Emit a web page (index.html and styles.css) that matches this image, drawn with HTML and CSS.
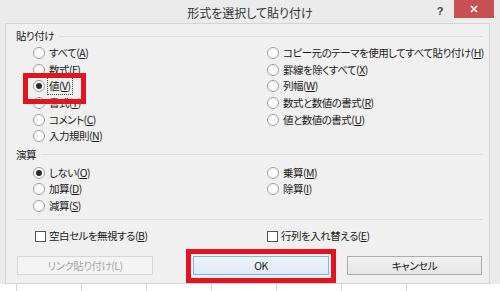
FILE: index.html
```html
<!DOCTYPE html>
<html lang="ja">
<head>
<meta charset="utf-8">
<title>形式を選択して貼り付け</title>
<link rel="stylesheet" href="styles.css">
</head>
<body>
<div class="screen">
  <div class="window">
    <div class="titlebar">
      <div class="title">形式を選択して貼り付け</div>
      <div class="controls">
        <div class="help">?</div>
        <div class="close">
          <svg width="8" height="8" viewBox="0 0 8 8"><path d="M1 1L7 7M7 1L1 7" stroke="#fff" stroke-width="1.6" fill="none"/></svg>
        </div>
      </div>
    </div>
    <div class="client">
      <div class="group-head first"><span>貼り付け</span><i class="rule"></i></div>
      <div class="options paste">
        <label class="opt"><i class="radio"></i><span>すべて(<u>A</u>)</span></label>
        <label class="opt"><i class="radio"></i><span>数式(<u>F</u>)</span></label>
        <label class="opt"><i class="radio on"></i><span class="focus">値(<u>V</u>)</span></label>
        <label class="opt"><i class="radio"></i><span>書式(<u>T</u>)</span></label>
        <label class="opt"><i class="radio"></i><span>コメント(<u>C</u>)</span></label>
        <label class="opt"><i class="radio"></i><span>入力規則(<u>N</u>)</span></label>
        <label class="opt"><i class="radio"></i><span>コピー元のテーマを使用してすべて貼り付け(<u>H</u>)</span></label>
        <label class="opt"><i class="radio"></i><span>罫線を除くすべて(<u>X</u>)</span></label>
        <label class="opt"><i class="radio"></i><span>列幅(<u>W</u>)</span></label>
        <label class="opt"><i class="radio"></i><span>数式と数値の書式(<u>R</u>)</span></label>
        <label class="opt"><i class="radio"></i><span>値と数値の書式(<u>U</u>)</span></label>
      </div>
      <div class="group-head second"><span>演算</span><i class="rule"></i></div>
      <div class="options ops">
        <label class="opt"><i class="radio on"></i><span>しない(<u>O</u>)</span></label>
        <label class="opt"><i class="radio"></i><span>加算(<u>D</u>)</span></label>
        <label class="opt"><i class="radio"></i><span>減算(<u>S</u>)</span></label>
        <label class="opt"><i class="radio"></i><span>乗算(<u>M</u>)</span></label>
        <label class="opt"><i class="radio"></i><span>除算(<u>I</u>)</span></label>
      </div>
      <div class="sep"></div>
      <div class="checks">
        <label class="check"><i class="box"></i><span>空白セルを無視する(<u>B</u>)</span></label>
        <label class="check"><i class="box"></i><span>行列を入れ替える(<u>E</u>)</span></label>
      </div>
      <div class="buttons">
        <div class="btn disabled">リンク貼り付け(L)</div>
        <div class="btn default">OK</div>
        <div class="btn cancel">キャンセル</div>
      </div>
    </div>
  </div>
  <div class="sheet">
    <i class="cell head"></i><i class="cell"></i><i class="cell"></i><i class="cell"></i><i class="cell"></i><i class="cell"></i><i class="cell"></i><i class="cell"></i>
  </div>
  <div class="mark mark-value"></div>
  <div class="mark mark-ok"></div>
</div>
</body>
</html>
```
FILE: styles.css
```css
* { box-sizing: border-box; }
html, body { margin: 0; padding: 0; }
body {
  width: 500px;
  height: 291px;
  overflow: hidden;
  background: #fff;
  font-family: "Noto Sans CJK JP", "Noto Sans", sans-serif;
  font-size: 10.5px;
  line-height: 14px;
  letter-spacing: -0.5px;
  color: #1a1a1a;
  font-feature-settings: "palt";
}
i { font-style: normal; display: block; }
u { text-decoration: underline; text-underline-offset: 1px; }

.screen { position: relative; width: 500px; height: 291px; }

.window {
  height: 284px;
  background: #ebebeb;
  display: flex;
  flex-direction: column;
}

.titlebar {
  height: 23px;
  display: grid;
  grid-template-columns: 1fr auto 1fr;
}
.title {
  grid-column: 2;
  font-size: 12px;
  line-height: 14px;
  letter-spacing: 0;
  padding-top: 6px;
  color: #333;
}
.controls {
  grid-column: 3;
  display: flex;
  justify-content: flex-end;
  align-items: flex-start;
}
.help {
  width: 14px;
  margin-right: 7px;
  margin-top: 4px;
  text-align: center;
  font-family: "Liberation Sans", sans-serif;
  font-weight: bold;
  font-size: 11px;
  line-height: 14px;
  letter-spacing: 0;
  color: #444;
}
.close {
  width: 40px;
  height: 18px;
  margin-right: 6px;
  background: #c75050;
  display: flex;
  align-items: center;
  justify-content: center;
}

.client {
  margin-left: 5px;
  width: 485px;
  flex: 1;
  background: #f0f0f0;
  border: 1px solid #d4d4d4;
}

.group-head {
  display: flex;
  align-items: center;
  height: 14px;
  padding-left: 10px;
  padding-right: 6px;
}
.group-head.first { margin-top: 5px; }
.group-head.second { margin-top: 3px; }
.group-head .rule {
  flex: 1;
  height: 1px;
  background: #dcdcdc;
  margin-left: 5px;
}

.options {
  display: grid;
  grid-auto-flow: column;
  grid-template-columns: 234px auto;
  padding-left: 27px;
}
.options.paste { margin-top: 2px; grid-template-rows: repeat(6, 16.6px); }
.options.ops { margin-top: 3px; grid-template-rows: repeat(3, 16.6px); }

.opt, .check {
  display: flex;
  align-items: center;
  white-space: nowrap;
}
.radio {
  width: 12px;
  height: 12px;
  flex: none;
  border: 1px solid #9a9a9a;
  border-radius: 50%;
  background: #fff;
  margin-right: 4px;
  display: flex;
  align-items: center;
  justify-content: center;
}
.radio.on::after {
  content: "";
  width: 6px;
  height: 6px;
  border-radius: 50%;
  background: #2a2a2a;
}
.focus { outline: 1px dotted #444; outline-offset: 1px; }

.sep {
  height: 1px;
  background: #dcdcdc;
  margin: 5px 6px 0 10px;
}

.checks {
  display: grid;
  grid-template-columns: 232px auto;
  padding-left: 29px;
  margin-top: 8px;
  height: 16px;
}
.box {
  width: 11px;
  height: 11px;
  flex: none;
  border: 1px solid #555;
  background: #fff;
  margin-right: 3px;
}

.buttons {
  display: flex;
  margin-top: 12px;
  padding-left: 11px;
}
.btn {
  width: 136px;
  height: 19px;
  border: 1px solid #adadad;
  background: linear-gradient(#f2f2f2, #e5e5e5);
  display: flex;
  align-items: center;
  justify-content: center;
  color: #1a1a1a;
}
.btn.disabled {
  color: #a6a6a6;
  border-color: #d7d7d7;
  background: #f4f4f4;
}
.btn.default {
  margin-left: 40px;
  border-color: #7eb4ea;
  background: linear-gradient(#edf4fb, #dfebf7);
}
.btn.cancel { margin-left: 18px; width: 135px; }

.sheet {
  height: 7px;
  display: flex;
  background: #fff;
}
.cell {
  width: 65px;
  flex: none;
  border-left: 1px solid #d4d4d4;
}
.cell.head { width: 16px; border-left: 0; }

.mark {
  position: absolute;
  border: 5px solid #e1141f;
}
.mark-value { left: 23px; top: 73px; width: 63px; height: 31px; }
.mark-ok { left: 186px; top: 249px; width: 150px; height: 34px; }
```
